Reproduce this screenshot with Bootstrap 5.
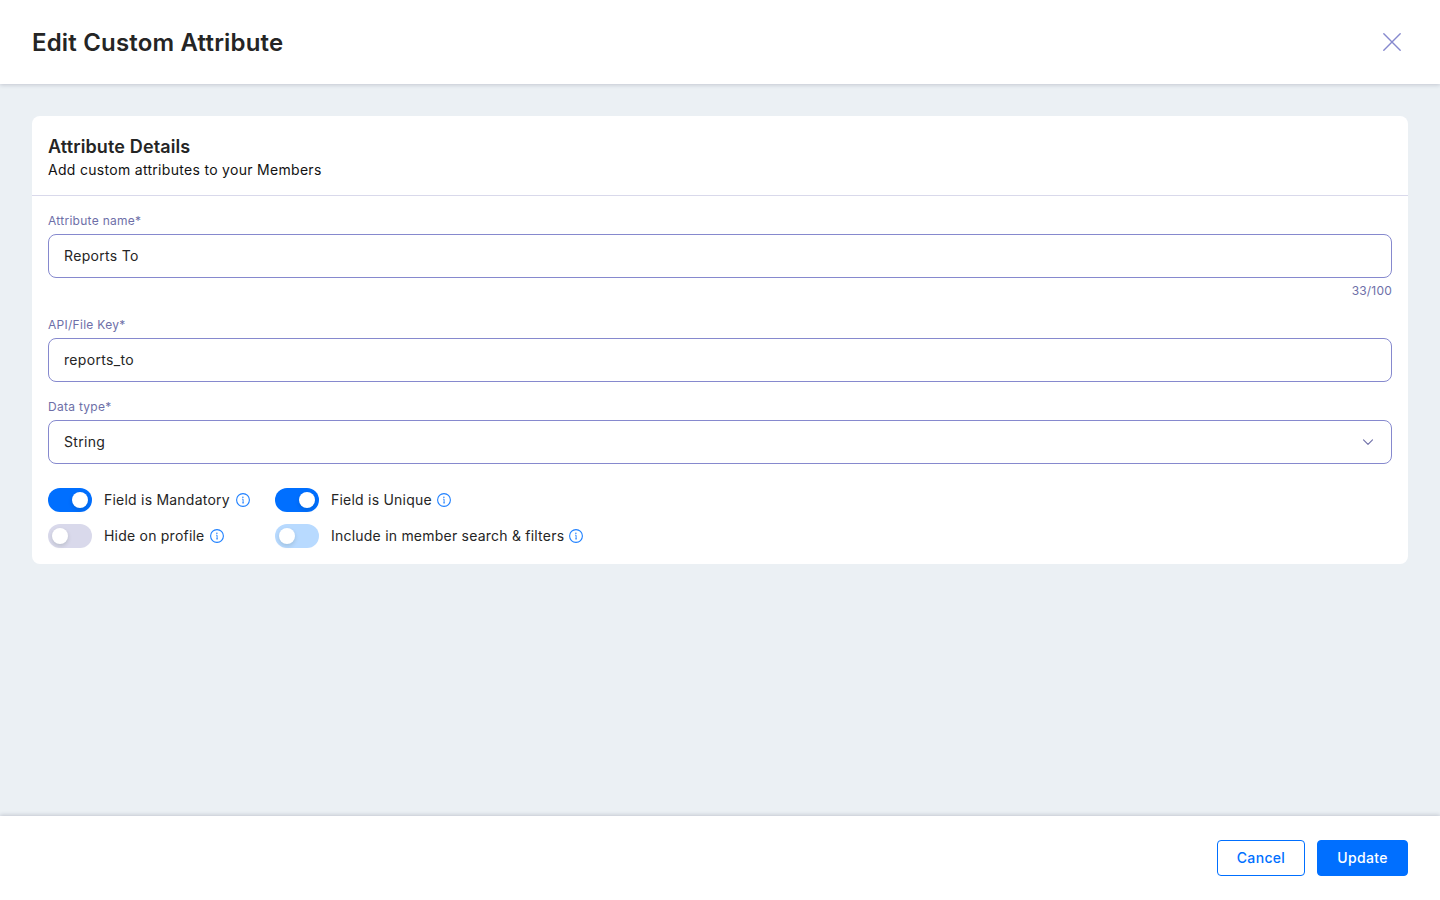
<!DOCTYPE html>
<html lang="en">
<head>
<meta charset="utf-8">
<meta name="viewport" content="width=device-width, initial-scale=1">
<title>Edit Custom Attribute</title>
<link href="https://cdn.jsdelivr.net/npm/bootstrap@5.3.0/dist/css/bootstrap.min.css" rel="stylesheet">
<style>
body { font-family: Inter, sans-serif; font-size: 14px; line-height: 20px; letter-spacing: .3px; color: #252525; background: #ebf0f4; }
.page-head { height: 84px; box-shadow: 0 1px 4px rgba(40,40,70,.2); }
.page-head h1 { font-size: 24px; line-height: 32px; font-weight: 600; letter-spacing: .18px; padding-top: 2px; }
.page-foot { height: 84px; box-shadow: 0 -1px 4px rgba(40,40,70,.2); }
.panel { border: 0; border-radius: 8px; color: #252525; margin: 32px 8px 0; }
.panel-head { height: 80px; padding: 20px 16px 0; border-bottom: 1px solid #d9d9eb; }
.panel-head h2 { font-size: 18px; line-height: 22px; font-weight: 600; letter-spacing: .13px; margin: 0 0 2px; }
.panel-head p { color: #121212; }
.panel-body { padding: 16px; }
.field-label { display: block; font-size: 12px; line-height: 18px; letter-spacing: .28px; color: #6e6fa8; margin-bottom: 4px; }
.counter { font-size: 12px; line-height: 18px; color: #6e6fa8; margin-top: 4px; letter-spacing: .2px; }
.field { height: 44px; border: 1px solid #8689ce; border-radius: 8px; padding: 0 15px; font-size: 14px; letter-spacing: .33px; color: #252525; background: #fff; }
input.field { padding-bottom: 2px; }
.toggles { display: grid; grid-template-columns: 203px auto; justify-content: start; column-gap: 24px; row-gap: 12px; margin-top: 24px; letter-spacing: .22px; }
.toggle { width: 44px; height: 24px; border-radius: 12px; padding: 4px; margin-right: 12px; background: #d9d9eb; }
.toggle::after { content: ""; display: block; width: 16px; height: 16px; border-radius: 50%; background: #fff; box-shadow: 0 2px 4px rgba(0,35,11,.14); }
.toggle.on { background: #006fff; }
.toggle.on::after { margin-left: 20px; }
.toggle.pale { background: #b8daff; }
.info { margin-left: 4px; }
.action { height: 36px; border-radius: 4px; padding: 0; font-size: 14px; line-height: 20px; font-weight: 500; letter-spacing: .33px; border: 1px solid #006fff; }
.action-line { width: 88px; color: #006fff; background: #fff; }
.action-fill { width: 91px; margin: 0 8px 0 12px; color: #fff; background: #006fff; }
</style>
</head>
<body class="d-flex flex-column vh-100 overflow-hidden">
<svg class="d-none">
  <symbol id="info" viewBox="0 0 16 16">
    <circle cx="8" cy="8" r="6.4" fill="none" stroke="#1f80ff" stroke-width="1.1"/>
    <path d="M7.2 7.2h.9v3.6M7.2 10.9h1.8" fill="none" stroke="#1f80ff" stroke-width=".9"/>
    <circle cx="7.9" cy="5.2" r=".75" fill="#1f80ff"/>
  </symbol>
</svg>
<header class="page-head bg-white d-flex align-items-center justify-content-between flex-shrink-0 ps-4 pe-4">
  <h1 class="m-0 ms-2">Edit Custom Attribute</h1>
  <button type="button" class="btn p-0 border-0 d-flex me-2" aria-label="Close">
    <svg width="32" height="32" viewBox="0 0 32 32"><path d="M7.8 7.8l16.4 16.4M24.2 7.8L7.8 24.2" stroke="#8689ce" stroke-width="1.4" stroke-linecap="round"/></svg>
  </button>
</header>
<main class="flex-grow-1 px-4">
  <section class="card panel">
    <div class="panel-head">
      <h2>Attribute Details</h2>
      <p class="m-0">Add custom attributes to your Members</p>
    </div>
    <form class="panel-body">
      <label class="field-label" for="name">Attribute name*</label>
      <input id="name" class="form-control field" value="Reports To">
      <div class="counter text-end">33/100</div>
      <label class="field-label mt-3" for="key">API/File Key*</label>
      <input id="key" class="form-control field" value="reports_to">
      <label class="field-label mt-3">Data type*</label>
      <div class="field d-flex align-items-center justify-content-between">
        <span>String</span>
        <svg width="16" height="16" viewBox="0 0 16 16"><path d="M3.5 5.8L8 10.3l4.5-4.5" fill="none" stroke="#6e6fa8" stroke-width="1.1" stroke-linecap="round" stroke-linejoin="round"/></svg>
      </div>
      <div class="toggles">
        <div class="d-flex align-items-center"><span class="toggle on"></span>Field is Mandatory<svg class="info ms-auto" width="16" height="16"><use href="#info"/></svg></div>
        <div class="d-flex align-items-center"><span class="toggle on"></span>Field is Unique<svg class="info" width="16" height="16"><use href="#info"/></svg></div>
        <div class="d-flex align-items-center"><span class="toggle"></span>Hide on profile<svg class="info" width="16" height="16"><use href="#info"/></svg></div>
        <div class="d-flex align-items-center"><span class="toggle pale"></span>Include in member search &amp; filters<svg class="info" width="16" height="16"><use href="#info"/></svg></div>
      </div>
    </form>
  </section>
</main>
<footer class="page-foot bg-white d-flex align-items-center justify-content-end flex-shrink-0 px-4">
  <button type="button" class="btn action action-line">Cancel</button>
  <button type="button" class="btn action action-fill">Update</button>
</footer>
<script src="https://cdn.jsdelivr.net/npm/bootstrap@5.3.0/dist/js/bootstrap.bundle.min.js"></script>
</body>
</html>
